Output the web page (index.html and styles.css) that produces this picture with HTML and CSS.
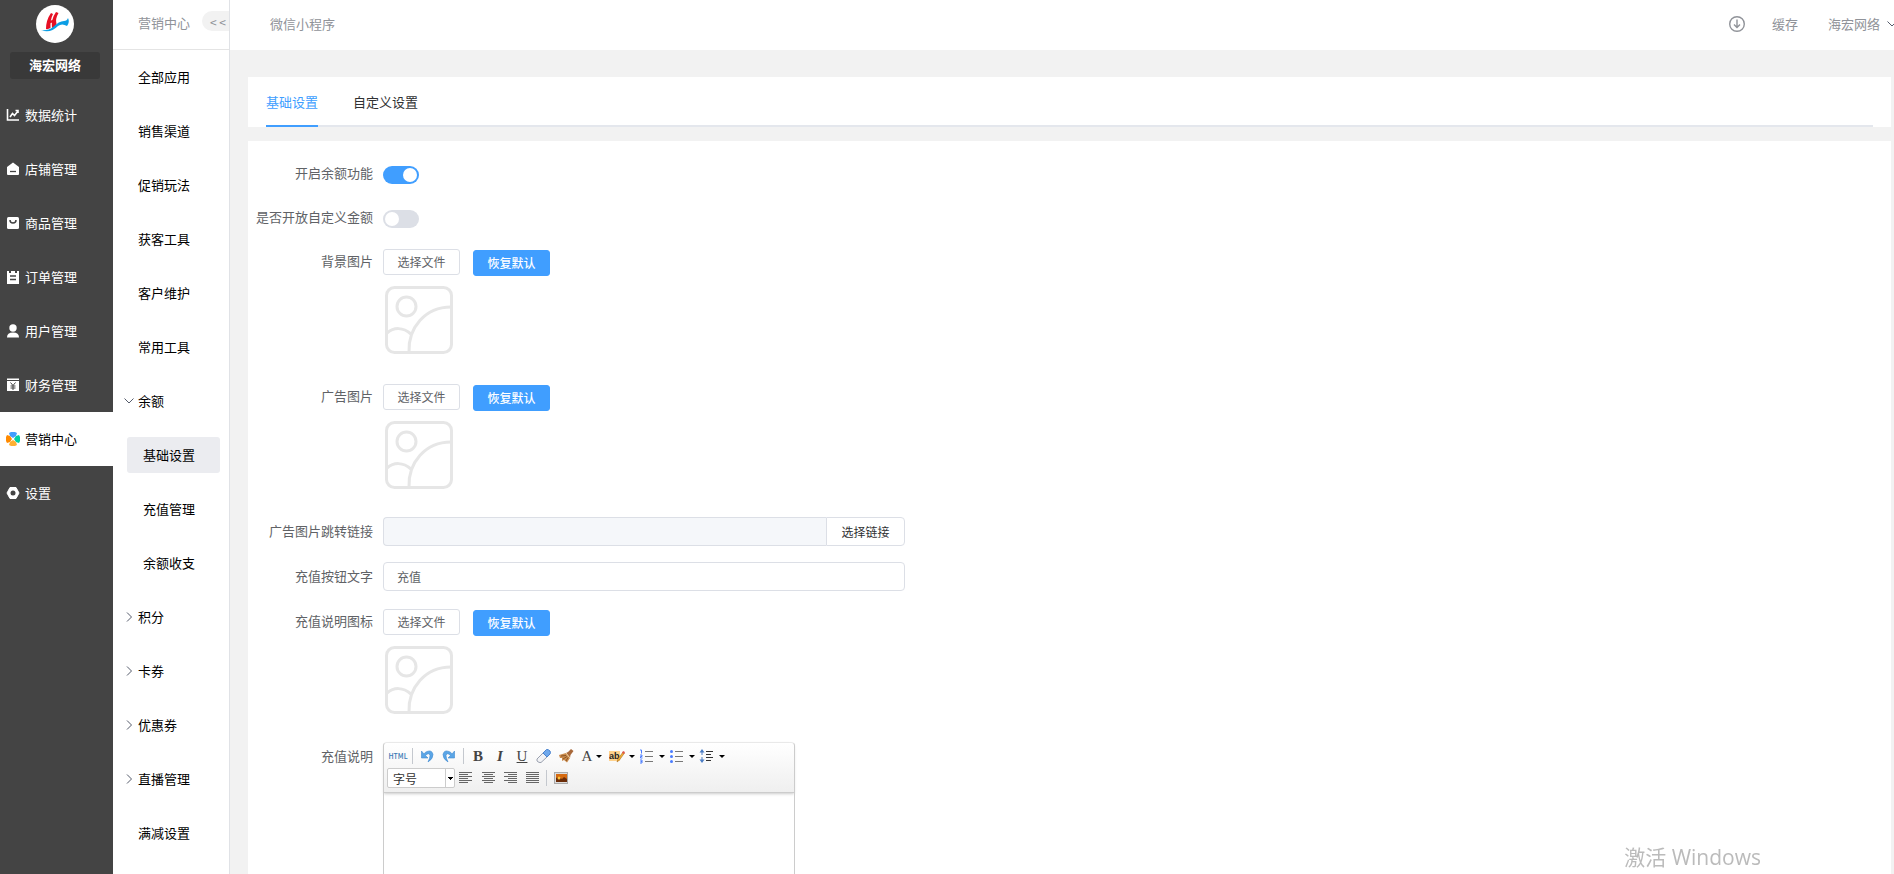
FILE: index.html
```html
<!DOCTYPE html>
<html lang="zh-CN">
<head>
    <meta charset="UTF-8">
    <title>基础设置</title>
    <link rel="stylesheet" href="styles.css">
</head>
<body>
<!-- 公用图标 -->
<svg class="symbols" aria-hidden="true">
    <symbol id="picture" viewBox="0 0 68 68">
        <g fill="none" stroke="#e6e6e6" stroke-width="3">
            <rect x="1.500" y="1.500" width="65" height="65" rx="8"/>
            <circle cx="21.500" cy="20.500" r="9.500"/>
            <path d="M2 47C9 41 18 41 26 48M24 66C23 42 40 21 66 21"/>
        </g>
    </symbol>
    <symbol id="right" viewBox="0 0 10 10"><path d="M3 0.500L7.500 5L3 9.500" fill="none" stroke="#555b6b"/></symbol>
    <symbol id="down" viewBox="0 0 10 10"><path d="M0.500 2.500L5 7L9.500 2.500" fill="none" stroke="#555b6b"/></symbol>
</svg>
<div class="app">
    <nav class="sidebar">
        <svg class="logo" viewBox="0 0 38 38">
            <circle cx="19" cy="19" r="19" fill="#fff"/>
            <path d="M10 24Q10 15 15 8L17 9Q14 15 14.500 23Q12 24.500 10 24Z" fill="#e60f24"/>
            <path d="M16 23Q15 14 20 7L22.500 8Q19 14 20.500 19L18.500 22Z" fill="#e60f24"/>
            <path d="M13 16L20 14V16.500L13 18.500Z" fill="#e60f24"/>
            <path d="M5 25Q12 26 17 22Q23 16 28 16Q31 16 32 13Q34 17 31 21Q26 18 22 21Q14 29 5 25Z" fill="#0b9ee5"/>
        </svg>
        <div class="shop-name">海宏网络</div>
        <ul class="menu">
            <li><a href="#"><svg viewBox="0 0 14 14"><path d="M1.500 1V12H13M4 9L6.500 5.500L8.500 7.500L12 3M9.500 2.500H12V5" fill="none" stroke="#fff" stroke-width="1.600"/></svg>数据统计</a></li>
            <li><a href="#"><svg viewBox="0 0 14 14"><path d="M1 5L7 0.500L13 5V12Q13 13 12 13H2Q1 13 1 12Z" fill="#fff"/><path d="M4 9.500H10" stroke="#444" stroke-width="1.300"/></svg>店铺管理</a></li>
            <li><a href="#"><svg viewBox="0 0 14 14"><rect x="1" y="1" width="12" height="12" rx="1.500" fill="#fff"/><path d="M4 4Q4 7 7 7Q10 7 10 4" fill="none" stroke="#444" stroke-width="1.500"/></svg>商品管理</a></li>
            <li><a href="#"><svg viewBox="0 0 14 14"><path d="M1 1H3V3H5V1H9V3H11V1H13V14H1Z" fill="#fff"/><path d="M4 6H10M4 9.500H10" stroke="#444" stroke-width="1.300"/></svg>订单管理</a></li>
            <li><a href="#"><svg viewBox="0 0 14 14"><circle cx="7" cy="4" r="3.700" fill="#fff"/><path d="M1 13.500Q1 8.500 7 8.500Q13 8.500 13 13.500Z" fill="#fff"/></svg>用户管理</a></li>
            <li><a href="#"><svg viewBox="0 0 14 14"><path d="M1 0.500H13V2H1ZM1 3H13V13H1Z" fill="#fff"/><path d="M4.500 4.500L7 7.500L9.500 4.500M7 7.500V12M4.500 8H9.500M4.500 10H9.500" fill="none" stroke="#444"/></svg>财务管理</a></li>
            <li class="on"><a href="#"><svg viewBox="0 0 14 14"><path d="M3 1L5 0H9L11 1L10 4L7 6L4 4Z" fill="#409eff"/><path d="M1 3L4 4L6 7L4 10L1 11L0 9V5Z" fill="#ff8a00"/><path d="M13 3L10 4L8 7L10 10L13 11L14 9V5Z" fill="#00cfa5"/><path d="M3 13L4 10L7 8L10 10L11 13L9 14H5Z" fill="#ffb032"/></svg>营销中心</a></li>
            <li><a href="#"><svg viewBox="0 0 14 14"><path d="M4 1.500H10L13 7L10 12.500H4L1 7Z" fill="#fff" stroke="#fff" stroke-linejoin="round"/><circle cx="7" cy="7" r="2.500" fill="#444"/></svg>设置</a></li>
        </ul>
    </nav>
    <nav class="submenu">
        <div class="submenu-head">营销中心<button class="fold" type="button" aria-label="收起">&lt;&nbsp;&lt;</button></div>
        <ul class="sub-list">
            <li><a href="#">全部应用</a></li>
            <li><a href="#">销售渠道</a></li>
            <li><a href="#">促销玩法</a></li>
            <li><a href="#">获客工具</a></li>
            <li><a href="#">客户维护</a></li>
            <li><a href="#">常用工具</a></li>
            <li class="group"><a href="#"><svg><use href="#down"/></svg>余额</a></li>
            <li class="child on"><a href="#">基础设置</a></li>
            <li class="child"><a href="#">充值管理</a></li>
            <li class="child"><a href="#">余额收支</a></li>
            <li class="group"><a href="#"><svg><use href="#right"/></svg>积分</a></li>
            <li class="group"><a href="#"><svg><use href="#right"/></svg>卡券</a></li>
            <li class="group"><a href="#"><svg><use href="#right"/></svg>优惠券</a></li>
            <li class="group"><a href="#"><svg><use href="#right"/></svg>直播管理</a></li>
            <li><a href="#">满减设置</a></li>
        </ul>
    </nav>
    <div class="content">
        <header class="topbar">
            <span class="crumb">微信小程序</span>
            <a href="#" class="download" aria-label="下载"><svg viewBox="0 0 16 16" fill="none" stroke="#909399"><circle cx="8" cy="8" r="7.300" stroke-width="1.400"/><path d="M8 3.500V11.500M5 8.500L8 11.500L11 8.500" stroke-width="1.400"/></svg></a>
            <a href="#" class="cache">缓存</a>
            <a href="#" class="account">海宏网络<svg><use href="#down"/></svg></a>
        </header>
        <main class="main">
            <div class="card tabs-card">
                <div class="tabs" role="tablist">
                    <button class="tab on" type="button" role="tab" aria-selected="true">基础设置</button>
                    <button class="tab" type="button" role="tab" aria-selected="false">自定义设置</button>
                </div>
            </div>
            <form class="card form">
                <div class="row">
                    <label for="balance">开启余额功能</label>
                    <input class="switch" id="balance" type="checkbox" checked>
                </div>
                <div class="row">
                    <label for="custom">是否开放自定义金额</label>
                    <input class="switch" id="custom" type="checkbox">
                </div>
                <div class="row upload">
                    <label for="bg">背景图片</label>
                    <div class="field">
                        <div class="btns">
                            <button class="btn" id="bg" type="button">选择文件</button>
                            <button class="btn primary" type="button">恢复默认</button>
                        </div>
                        <svg class="pic"><use href="#picture"/></svg>
                    </div>
                </div>
                <div class="row upload">
                    <label for="ad">广告图片</label>
                    <div class="field">
                        <div class="btns">
                            <button class="btn" id="ad" type="button">选择文件</button>
                            <button class="btn primary" type="button">恢复默认</button>
                        </div>
                        <svg class="pic"><use href="#picture"/></svg>
                    </div>
                </div>
                <div class="row text-row">
                    <label for="link">广告图片跳转链接</label>
                    <div class="input-group">
                        <input class="input" id="link" type="text" disabled>
                        <button class="append" type="button">选择链接</button>
                    </div>
                </div>
                <div class="row text-row">
                    <label for="btnText">充值按钮文字</label>
                    <div class="input-group">
                        <input class="input" id="btnText" type="text" value="充值">
                    </div>
                </div>
                <div class="row upload">
                    <label for="icon">充值说明图标</label>
                    <div class="field">
                        <div class="btns">
                            <button class="btn" id="icon" type="button">选择文件</button>
                            <button class="btn primary" type="button">恢复默认</button>
                        </div>
                        <svg class="pic"><use href="#picture"/></svg>
                    </div>
                </div>
                <div class="row">
                    <label for="desc">充值说明</label>
                    <div class="editor">
                        <div class="toolbar">
                            <div class="tools">
                                <button class="tool html" type="button">HTML</button>
                                <i class="line"></i>
                                <button class="tool" type="button" aria-label="后退"><svg viewBox="0 0 16 16"><path d="M2.500 3V10H9L6.500 7.500Q10 4 11 7.500Q11 10 9 14Q14 11 14 6.500Q13 1.500 8 3.500Q6 4 5 6Z" fill="#5aa5e6" stroke="#3f8ad0" stroke-width="0.600"/></svg></button>
                                <button class="tool" type="button" aria-label="前进"><svg viewBox="0 0 16 16"><path d="M13.500 3V10H7L9.500 7.500Q6 4 5 7.500Q5 10 7 14Q2 11 2 6.500Q3 1.500 8 3.500Q10 4 11 6Z" fill="#5aa5e6" stroke="#3f8ad0" stroke-width="0.600"/></svg></button>
                                <i class="line"></i>
                                <button class="tool letter" type="button"><b>B</b></button>
                                <button class="tool letter" type="button"><b><em>I</em></b></button>
                                <button class="tool letter" type="button"><u>U</u></button>
                                <button class="tool" type="button" aria-label="删除格式"><svg viewBox="0 0 16 16"><path d="M1 11L7 5L11 9L5 14.500Q3 15 1 13Z" fill="#f2f3f6" stroke="#9aa0ae"/><path d="M7 5L10.500 1.500Q12 1 14 3Q15 4.500 14 6L11 9Z" fill="#6fa8ec" stroke="#4a83cf"/></svg></button>
                                <button class="tool" type="button" aria-label="格式刷"><svg viewBox="0 0 16 16"><path d="M1 7L8 5L12 10L9 14.500L6 12L4 13L4 10L2 10Z" fill="#c98a4b"/><path d="M3 8L8 7.500M5 11L9 8.500M8 13L10 9.500" stroke="#8a5525" fill="none"/><path d="M8 5L10 4L13 1L15.500 3L12.500 7L12 10Z" fill="#a8683a"/><path d="M8 5L12 10" stroke="#f0d09a"/></svg></button>
                                <button class="tool letter drop" type="button">A<i class="caret"></i></button>
                                <button class="tool drop" type="button" aria-label="文字背景"><svg viewBox="0 0 16 16"><rect x="0" y="3" width="11" height="10" fill="#ffd28c"/><text x="0" y="11" class="ab">ab</text><path d="M8 14L9 11L14 4L15.500 5L10.500 12Z" fill="#f2b134" stroke="#a86b1f" stroke-width="0.600"/><path d="M13 5L14 3L16 4L15 6Z" fill="#e2544c"/></svg><i class="caret"></i></button>
                                <button class="tool drop" type="button" aria-label="编号"><svg viewBox="0 0 16 16"><path d="M6 3.500H14M6 8.500H14M6 13.500H14" stroke="#777"/><path d="M1 2H2.500V5.500M1 7H3V8.500H1.500V10H3.500M1 12H3V15H1M1.500 13.500H3" fill="none" stroke="#4a7cff"/></svg><i class="caret"></i></button>
                                <button class="tool drop" type="button" aria-label="项目符号"><svg viewBox="0 0 16 16"><path d="M6 3.500H14M6 8.500H14M6 13.500H14" stroke="#777"/><g fill="#4a7cff"><circle cx="2.500" cy="3.500" r="1.500"/><circle cx="2.500" cy="8.500" r="1.500"/><circle cx="2.500" cy="13.500" r="1.500"/></g></svg><i class="caret"></i></button>
                                <button class="tool drop" type="button" aria-label="行距"><svg viewBox="0 0 16 16"><path d="M7 3.500H14M7 6.500H12M7 9.500H14M7 12.500H12" stroke="#333"/><path d="M3 1L5.500 4.500H0.500ZM3 15L5.500 11.500H0.500Z" fill="#4a7cc4"/><path d="M3 4V7M3 9V12" stroke="#4a7cc4"/></svg><i class="caret"></i></button>
                            </div>
                            <div class="tools">
                                <select class="size" aria-label="字号"><option>字号</option></select>
                                <button class="tool" type="button" aria-label="左对齐"><svg viewBox="0 0 16 16"><path d="M1 2.500H14M1 4.500H10M1 6.500H14M1 8.500H10M1 10.500H14M1 12.500H10"/></svg></button>
                                <button class="tool" type="button" aria-label="居中"><svg viewBox="0 0 16 16"><path d="M2 2.500H15M4 4.500H13M2 6.500H15M4 8.500H13M2 10.500H15M4 12.500H13"/></svg></button>
                                <button class="tool" type="button" aria-label="右对齐"><svg viewBox="0 0 16 16"><path d="M2 2.500H15M6 4.500H15M2 6.500H15M6 8.500H15M2 10.500H15M6 12.500H15"/></svg></button>
                                <button class="tool" type="button" aria-label="两端对齐"><svg viewBox="0 0 16 16"><path d="M2 2.500H15M2 4.500H15M2 6.500H15M2 8.500H15M2 10.500H15M2 12.500H15"/></svg></button>
                                <i class="line"></i>
                                <button class="tool" type="button" aria-label="图片"><svg viewBox="0 0 16 16"><rect x="1.500" y="2.500" width="13" height="11" fill="#ddd" stroke="#aaa"/><rect x="3" y="4" width="11" height="8" fill="#d66a10"/><path d="M3 8Q6 6 9 9L11 7L14 9V12H3Z" fill="#6b2c08"/><circle cx="6" cy="8" r="1.500" fill="#ffc23a"/></svg></button>
                            </div>
                        </div>
                        <textarea id="desc" class="editor-text"></textarea>
                    </div>
                </div>
            </form>
        </main>
    </div>
</div>
<div class="watermark">激活 Windows</div>
</body>
</html>
```
FILE: styles.css
```css
* {
    box-sizing: border-box;
    padding: 0;
    margin: 0;
}
body {
    font-family: "Noto Sans CJK SC", sans-serif;
    font-size: 13px;
    line-height: 20px;
    color: #303133;
    background: #f2f2f2;
    overflow: hidden;
}
button, input, select, textarea {
    font-family: inherit;
    font-size: 12px;
    color: #606266;
}
button {
    background: none;
    border: none;
    cursor: pointer;
}
ul {
    list-style: none;
}
a {
    color: inherit;
    text-decoration: none;
}
.symbols {
    display: none;
}
.app {
    display: flex;
    height: 100vh;
}

/* 一级菜单 */
.sidebar {
    flex: none;
    width: 113px;
    background: #444;
    color: #fff;
}
.logo {
    display: block;
    width: 38px;
    height: 38px;
    margin: 5px auto 9px 36px;
}
.shop-name {
    width: 90px;
    margin: 0 10px 9px;
    padding-bottom: 2px;
    line-height: 25px;
    background: #393939;
    border-radius: 3px;
    text-align: center;
    font-weight: bold;
}
.menu a {
    display: flex;
    align-items: center;
    gap: 5px;
    height: 54px;
    padding-left: 6px;
}
.menu svg {
    width: 14px;
    height: 14px;
}
.menu .on {
    background: #fff;
    color: #000;
}

/* 二级菜单 */
.submenu {
    flex: none;
    width: 117px;
    background: #fff;
    border-right: 1px solid #e0e2e6;
    color: #000;
    overflow: hidden;
}
.submenu-head {
    display: flex;
    justify-content: space-between;
    height: 50px;
    padding: 11px 0 0 25px;
    line-height: 24px;
    border-bottom: 1px solid #e4e4e4;
    color: #909399;
}
.fold {
    width: 27px;
    height: 20px;
    padding-left: 5px;
    border-radius: 10px 0 0 10px;
    background: #f2f2f2;
    color: #909399;
}
.sub-list a {
    display: flex;
    align-items: center;
    height: 54px;
    padding-left: 25px;
}
.sub-list .group a {
    padding-left: 11px;
    gap: 4px;
}
.sub-list svg {
    width: 10px;
    height: 10px;
}
.sub-list .child {
    padding: 9px 9px 9px 14px;
}
.sub-list .child a {
    height: 36px;
    padding-left: 16px;
    border-radius: 3px;
}
.sub-list .on a {
    background: #ebecf0;
}

/* 顶部 */
.content {
    flex: 1;
    min-width: 0;
    overflow: hidden;
}
.topbar {
    display: flex;
    align-items: center;
    height: 50px;
    padding-left: 40px;
    padding-bottom: 3px;
    background: #fff;
    color: #909399;
    overflow: hidden;
}
.crumb {
    margin-right: auto;
}
.download, .download svg {
    display: block;
    width: 16px;
    height: 16px;
}
.cache {
    margin: 0 30px 0 27px;
}
.account {
    display: flex;
    align-items: center;
    gap: 7px;
    margin-right: -3px;
}
.account svg {
    width: 10px;
    height: 10px;
}

/* 内容 */
.main {
    padding: 27px 3px 0 18px;
}
.card {
    background: #fff;
}
.tabs-card {
    padding: 0 18px;
    margin-bottom: 14px;
}
.tabs {
    display: flex;
    gap: 35px;
    height: 50px;
    box-shadow: inset 0 -2px #e4e7ed;
}
.tab {
    padding-bottom: 2px;
    font-size: 13px;
    color: #303133;
}
.tab.on {
    padding-bottom: 0;
    color: #409eff;
    border-bottom: 2px solid #409eff;
}
.form {
    padding-top: 18px;
}
.row {
    display: flex;
    align-items: flex-start;
    gap: 10px;
    min-height: 28px;
    margin-bottom: 16px;
}
.row label {
    flex: none;
    width: 125px;
    text-align: right;
    line-height: 28px;
    color: #606266;
}
.text-row {
    min-height: 29px;
}
.upload {
    min-height: 119px;
}
.switch {
    appearance: none;
    width: 36px;
    height: 18px;
    margin-top: 7px;
    padding: 2px;
    border-radius: 9px;
    background: #dcdfe6;
}
.switch::before {
    content: "";
    display: block;
    width: 14px;
    height: 14px;
    border-radius: 50%;
    background: #fff;
}
.switch:checked {
    background: #409eff;
}
.switch:checked::before {
    margin-left: auto;
}
.btns {
    display: flex;
    align-items: flex-start;
    gap: 13px;
    padding-top: 2px;
}
.btn {
    width: 77px;
    height: 26px;
    padding-bottom: 2px;
    border: 1px solid #dcdfe6;
    border-radius: 3px;
}
.primary {
    margin-top: 1px;
    background: #409eff;
    border-color: #409eff;
    color: #fff;
    font-weight: 500;
}
.pic {
    display: block;
    width: 68px;
    height: 68px;
    margin: 10px 0 0 2px;
}
.input-group {
    display: flex;
    width: 522px;
}
.input {
    flex: 1;
    min-width: 0;
    height: 29px;
    padding: 0 13px;
    border: 1px solid #dcdfe6;
    border-radius: 4px;
}
.input:disabled {
    border-radius: 4px 0 0 4px;
    border-right: none;
    background: #f5f7fa;
}
.append {
    width: 79px;
    border: 1px solid #dcdfe6;
    border-radius: 0 4px 4px 0;
    color: #303133;
}

/* 编辑器 */
.editor {
    width: 412px;
    border: 1px solid #ccc;
    border-top-color: #eee;
    border-radius: 4px 4px 0 0;
}
.toolbar {
    padding: 2px 3px 3px;
    border-bottom: 1px solid #ccc;
    border-radius: 4px 4px 0 0;
    background: linear-gradient(#fff, #efefef);
    box-shadow: 0 1px 3px #ccc;
}
.tools {
    display: flex;
    align-items: center;
    height: 22px;
}
.tool {
    display: flex;
    align-items: center;
    justify-content: center;
    width: 22px;
    height: 22px;
    color: #444;
}
.tool svg {
    flex: none;
    width: 16px;
    height: 16px;
    fill: none;
    stroke-width: 1;
}
.tool svg > path:only-child:not([fill]) {
    stroke: #666;
}
.drop {
    width: 30px;
    gap: 4px;
}
.letter {
    font-family: "Liberation Serif", serif;
    font-size: 15px;
}
.html {
    font-size: 7px;
    font-weight: 500;
    color: #3878b4;
}
.ab {
    font: bold 9px "Liberation Sans", sans-serif;
    fill: #222;
}
.caret {
    border: 3px solid transparent;
    border-top-color: #000;
    border-bottom: none;
}
.line {
    width: 1px;
    height: 16px;
    margin: 0 3px;
    background: #c4c8ce;
}
.size {
    appearance: none;
    width: 68px;
    height: 20px;
    padding-left: 5px;
    border: 1px solid #ccc;
    border-radius: 2px;
    background:
        conic-gradient(from 315deg at 50% 100%, #000 90deg, transparent 0) right 1px top 8px / 5px 3px no-repeat,
        linear-gradient(#ccc, #ccc) right 8px top 0 / 1px 100% no-repeat,
        #fff;
    color: #333;
}
.editor-text {
    display: block;
    width: 100%;
    height: 240px;
    border: none;
    background: transparent;
    resize: none;
}
.watermark {
    position: fixed;
    right: 133px;
    bottom: 2px;
    font-family: "Open Sans", "Noto Sans CJK SC", sans-serif;
    font-size: 21px;
    line-height: 30px;
    color: #bbb;
}
```
